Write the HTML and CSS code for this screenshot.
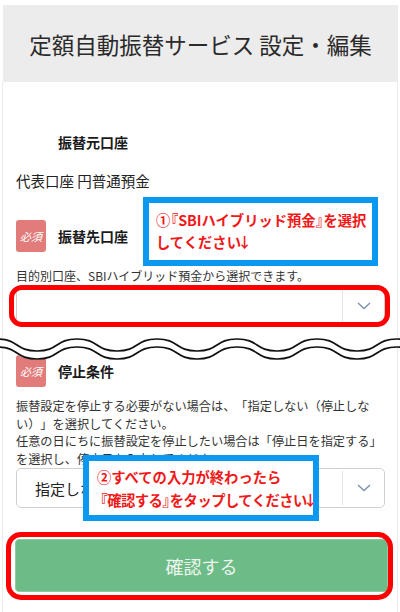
FILE: index.html
```html
<!DOCTYPE html>
<html lang="ja">
<head>
<meta charset="utf-8">
<title>定額自動振替サービス 設定・編集</title>
<link rel="stylesheet" href="styles.css">
</head>
<body>
<div class="page">
  <header class="title">定額自動振替サービス 設定・編集</header>
  <main class="form">
    <section class="field">
      <div class="field-head"><span class="badge-space"></span><h2 class="label">振替元口座</h2></div>
      <p class="value">代表口座 円普通預金</p>
    </section>
    <section class="field field-to">
      <div class="field-head"><span class="badge">必須</span><h2 class="label">振替先口座</h2></div>
      <p class="help">目的別口座、SBIハイブリッド預金から選択できます。</p>
      <div class="select select-to">
        <span class="select-text"></span>
        <span class="select-arrow"><svg width="14" height="8" viewBox="0 0 14 8"><polyline points="1,1 7,6.5 13,1" fill="none" stroke="#7d93ad" stroke-width="1.4"/></svg></span>
      </div>
    </section>
    <div class="cut">
      <svg class="wave" width="400" height="28" viewBox="0 0 400 28">
        <path d="M-3 8 C19 8 15 20 37 20 S55 8 77 8 S95 20 117 20 S135 8 157 8 S175 20 197 20 S215 8 237 8 S255 20 277 20 S295 8 317 8 S335 20 357 20 S375 8 397 8 S415 20 437 20" fill="none" stroke="#fff" stroke-width="9"/>
        <path d="M-3 4 C19 4 15 16 37 16 S55 4 77 4 S95 16 117 16 S135 4 157 4 S175 16 197 16 S215 4 237 4 S255 16 277 16 S295 4 317 4 S335 16 357 16 S375 4 397 4 S415 16 437 16" fill="none" stroke="#111" stroke-width="1.7"/>
        <path d="M-3 12 C19 12 15 24 37 24 S55 12 77 12 S95 24 117 24 S135 12 157 12 S175 24 197 24 S215 12 237 12 S255 24 277 24 S295 12 317 12 S335 24 357 24 S375 12 397 12 S415 24 437 24" fill="none" stroke="#111" stroke-width="1.7"/>
      </svg>
    </div>
    <section class="field field-stop">
      <div class="field-head"><span class="badge">必須</span><h2 class="label">停止条件</h2></div>
      <p class="desc">振替設定を停止する必要がない場合は、「指定しない（停止しない）」を選択してください。<br>任意の日にちに振替設定を停止したい場合は「停止日を指定する」を選択し、停止日を入力してください。</p>
      <div class="select">
        <span class="select-text">指定しない（停止しない）</span>
        <span class="select-arrow"><svg width="14" height="8" viewBox="0 0 14 8"><polyline points="1,1 7,6.5 13,1" fill="none" stroke="#7d93ad" stroke-width="1.4"/></svg></span>
      </div>
    </section>
    <div class="actions"><button class="confirm" type="button">確認する</button></div>
  </main>

  <div class="ring ring-select"></div>
  <div class="ring ring-button"></div>

  <div class="callout callout-1">①<span class="bk-open">『</span>SBIハイブリッド預金<span class="bk-close">』</span>を選択<br>してください<span class="arrow">↓</span></div>
  <div class="callout callout-2">②すべての入力が終わったら<br><span class="tight"><span class="bk-open">『</span>確認する<span class="bk-close">』</span>をタップしてください<span class="arrow">↓</span></span></div>
</div>
</body>
</html>
```

FILE: styles.css
```css
* { box-sizing: border-box; }

html, body {
  margin: 0;
  padding: 0;
  background: #fff;
}

body {
  font-family: "Noto Sans CJK JP", "Noto Sans", sans-serif;
  color: #222;
  text-spacing-trim: space-all;
}

.page {
  position: relative;
  width: 400px;
  height: 612px;
  overflow: hidden;
}

.title {
  margin: 5px 2px 0 3px;
  height: 77px;
  background: #ececec;
  display: flex;
  align-items: center;
  justify-content: center;
  font-size: 22.5px;
  font-weight: 400;
  color: #2a2a2a;
}

.form {
  margin: 0 2px;
  border-left: 1px solid #ececec;
  border-right: 1px solid #ececec;
  padding: 44px 12px 20px 13px;
  min-height: 530px;
}

.field-head {
  display: flex;
  align-items: center;
  gap: 12px;
  height: 32px;
}

.badge,
.badge-space {
  flex: 0 0 30px;
  width: 30px;
  height: 32px;
}

.badge {
  background: #e27c7b;
  border-radius: 3px;
  color: #fff;
  font-size: 11px;
  font-style: italic;
  display: flex;
  align-items: center;
  justify-content: center;
}

.label {
  margin: 0;
  font-size: 14px;
  font-weight: 700;
  line-height: 20px;
  color: #1a1a1a;
}

.value {
  margin: 13px 0 0;
  font-size: 14.5px;
  line-height: 20px;
}

.field-to {
  margin-top: 29px;
}

.help {
  margin: 16px 0 0;
  font-size: 12px;
  line-height: 16px;
  color: #333;
}

.select {
  display: flex;
  align-items: stretch;
  height: 40px;
  border: 1px solid #cfcfcf;
  border-radius: 5px;
  background: #fff;
}

.select-to {
  margin-top: 2px;
}

.select-text {
  flex: 1;
  display: flex;
  align-items: center;
  padding-left: 18px;
  font-size: 15px;
  color: #222;
}

.select-arrow {
  flex: 0 0 42px;
  border-left: 1px solid #e3e3e3;
  display: flex;
  align-items: center;
  justify-content: center;
  margin: 2px 0;
}

.cut {
  position: relative;
  height: 29px;
}

.wave {
  position: absolute;
  left: -16px;
  top: 9px;
  z-index: 1;
}

.desc {
  margin: 11px 0 0;
  font-size: 12.2px;
  line-height: 17.5px;
  color: #333;
}

.actions {
  margin-top: 31px;
}

.confirm {
  display: block;
  width: 373px;
  margin-left: -1px;
  height: 53px;
  border: 1px solid #8fcaa2;
  border-radius: 4px;
  background: #6dbb87;
  color: #eef6ef;
  font-family: inherit;
  font-size: 18px;
}

.ring {
  position: absolute;
  border: 5px solid #ff0000;
  z-index: 2;
}

.ring-select {
  left: 9px;
  top: 285px;
  width: 381px;
  height: 42px;
  border-radius: 13px;
}

.ring-button {
  left: 6px;
  top: 532px;
  width: 387px;
  height: 68px;
  border-radius: 15px;
}

.callout {
  position: absolute;
  z-index: 3;
  background: #fff;
  border: 6px solid #0a98f0;
  color: #f01818;
  font-weight: 700;
  font-size: 14.3px;
  white-space: nowrap;
}

.callout .bk-open {
  margin-left: -0.45em;
}

.callout .bk-close {
  margin-right: -0.45em;
}

.callout .arrow {
  margin: 0 -0.25em;
}

.callout .tight {
  letter-spacing: -0.5px;
}

.callout-1 {
  left: 143px;
  top: 197px;
  width: 235px;
  height: 69px;
  padding: 6px 0 0 7px;
  line-height: 22px;
}

.callout-2 {
  left: 83px;
  top: 455px;
  width: 236px;
  height: 66px;
  padding: 4px 0 0 8px;
  line-height: 23px;
}

.callout-2 .bk-open:first-child {
  margin-left: -0.25em;
}
```
